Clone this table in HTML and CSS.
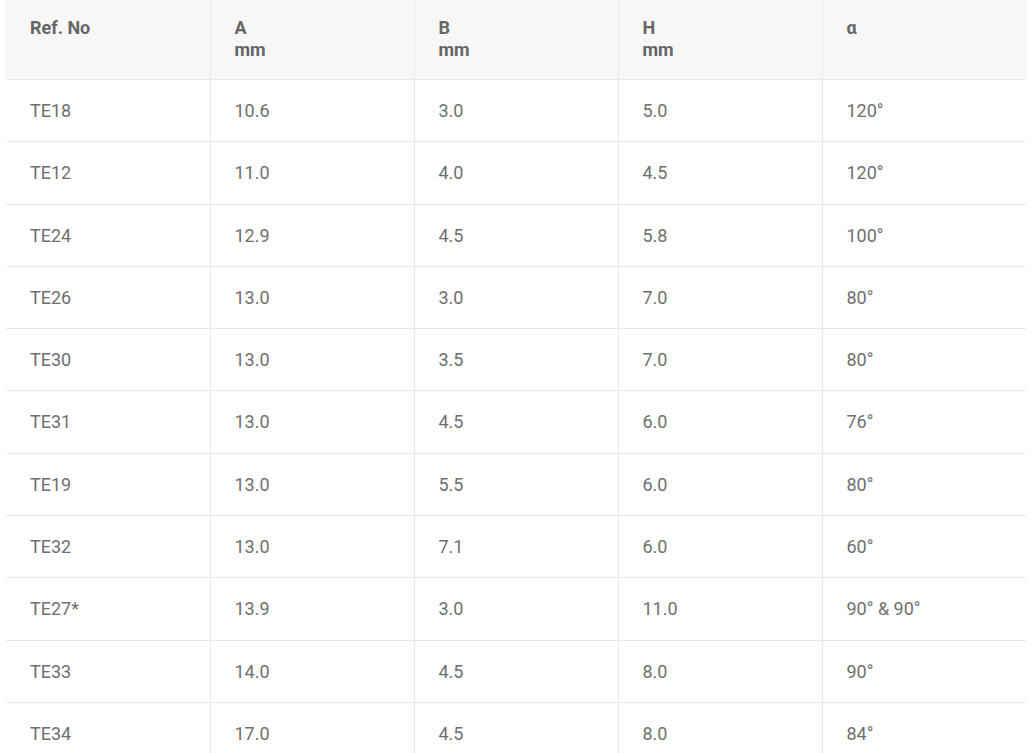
FILE: index.html
```html
<!DOCTYPE html>
<html>
<head>
<meta charset="utf-8">
<link rel="stylesheet" href="styles.css">
</head>
<body>
<table class="spec">
  <thead>
    <tr>
      <th>Ref. No</th>
      <th>A<br>mm</th>
      <th>B<br>mm</th>
      <th>H<br>mm</th>
      <th>α</th>
    </tr>
  </thead>
  <tbody>
    <tr><td>TE18</td><td>10.6</td><td>3.0</td><td>5.0</td><td>120°</td></tr>
    <tr><td>TE12</td><td>11.0</td><td>4.0</td><td>4.5</td><td>120°</td></tr>
    <tr><td>TE24</td><td>12.9</td><td>4.5</td><td>5.8</td><td>100°</td></tr>
    <tr><td>TE26</td><td>13.0</td><td>3.0</td><td>7.0</td><td>80°</td></tr>
    <tr><td>TE30</td><td>13.0</td><td>3.5</td><td>7.0</td><td>80°</td></tr>
    <tr><td>TE31</td><td>13.0</td><td>4.5</td><td>6.0</td><td>76°</td></tr>
    <tr><td>TE19</td><td>13.0</td><td>5.5</td><td>6.0</td><td>80°</td></tr>
    <tr><td>TE32</td><td>13.0</td><td>7.1</td><td>6.0</td><td>60°</td></tr>
    <tr><td>TE27*</td><td>13.9</td><td>3.0</td><td>11.0</td><td>90° &amp; 90°</td></tr>
    <tr><td>TE33</td><td>14.0</td><td>4.5</td><td>8.0</td><td>90°</td></tr>
    <tr><td>TE34</td><td>17.0</td><td>4.5</td><td>8.0</td><td>84°</td></tr>
  </tbody>
</table>
</body>
</html>
```
FILE: styles.css
```css
html, body {
  margin: 0;
  padding: 0;
  background: #ffffff;
}
body {
  padding: 0 9px 0 6px;
  font-family: Roboto, "Liberation Sans", Arial, sans-serif;
}
.spec {
  width: 1020px;
  border-collapse: collapse;
  table-layout: fixed;
  font-size: 18px;
  color: #6f6f6f;
}
.spec th,
.spec td {
  text-align: left;
  vertical-align: top;
  padding: 20px 24px;
  line-height: 21.3px;
  border-bottom: 1px solid #e8e8e8;
  border-left: 1px solid #e8e8e8;
}
.spec th:first-child,
.spec td:first-child {
  border-left: none;
}
.spec th {
  background: #f7f7f7;
  color: #666666;
  font-weight: 700;
  padding: 17px 24px 18px;
  line-height: 22px;
}
.spec td {
  vertical-align: middle;
}
```
